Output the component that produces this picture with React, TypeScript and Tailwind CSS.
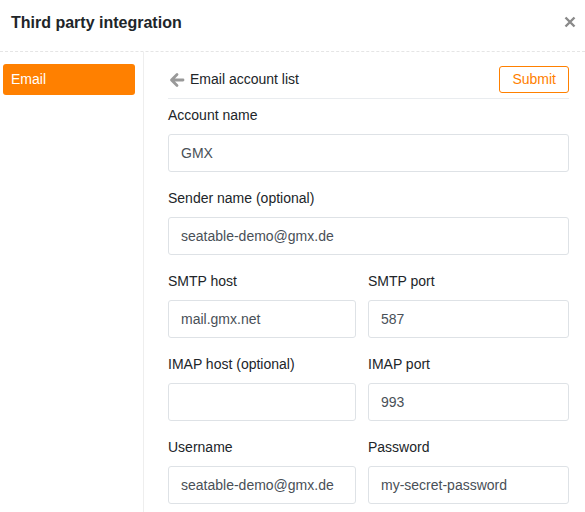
import type { ReactNode } from "react";

function Field({ label, children }: { label: string; children: ReactNode }) {
  return (
    <div className="mb-4">
      <div className="mb-2 text-[14px] leading-[21px] text-[#212529]">{label}</div>
      {children}
    </div>
  );
}

function Input({ value }: { value: string }) {
  return (
    <div className="flex h-[38px] items-center rounded-[3px] border border-[#dee2e6] px-[12px] text-[14px] text-[#495057]">
      {value}
    </div>
  );
}

export default function App() {
  return (
    <div className="h-[512px] w-[585px] overflow-hidden bg-white font-['Liberation_Sans',Arial,sans-serif]">
      <div className="flex h-[52px] items-start justify-between border-b border-dashed border-[#e5e5e5] pl-[11px] pr-[9px] pt-[13px]">
        <h1 className="text-[16px] font-bold leading-[20px] text-[#212529]">Third party integration</h1>
        <svg width="12" height="12" viewBox="0 0 12 12" className="mt-[3px]">
          <path d="M1.5 1.5 L10.5 10.5 M10.5 1.5 L1.5 10.5" stroke="#8a8a8a" strokeWidth="2.4" />
        </svg>
      </div>

      <div className="flex h-[460px]">
        <div className="w-[144px] shrink-0 border-r border-[#eeeeee] pl-[3px] pr-[8px] pt-[12px]">
          <div className="flex h-[31px] items-center rounded-[3px] bg-[#ff8000] pl-[8px] text-[14px] text-white">
            Email
          </div>
        </div>

        <div className="flex-1 pl-[24px] pr-[16px] pt-[14px]">
          <div className="flex items-center justify-between border-b border-[#e9ecef] pb-[5px]">
            <div className="flex items-center gap-[5px] text-[14px] text-[#212529]">
              <svg width="16" height="16" viewBox="0 0 16 16" className="ml-[1px]">
                <path d="M14 8 H3 M8 2.5 L2.5 8 L8 13.5" stroke="#999999" strokeWidth="2.8" fill="none" strokeLinecap="round" strokeLinejoin="round" />
              </svg>
              Email account list
            </div>
            <button className="h-[27px] rounded-[3px] border border-[#ff8000] px-[12px] text-[14px] text-[#ff8000]">
              Submit
            </button>
          </div>

          <div className="mt-[6px]">
            <Field label="Account name">
              <Input value="GMX" />
            </Field>
            <Field label="Sender name (optional)">
              <Input value="seatable-demo@gmx.de" />
            </Field>
            <div className="grid grid-cols-[188px_1fr] gap-x-3">
              <Field label="SMTP host">
                <Input value="mail.gmx.net" />
              </Field>
              <Field label="SMTP port">
                <Input value="587" />
              </Field>
              <Field label="IMAP host (optional)">
                <Input value="" />
              </Field>
              <Field label="IMAP port">
                <Input value="993" />
              </Field>
              <Field label="Username">
                <Input value="seatable-demo@gmx.de" />
              </Field>
              <Field label="Password">
                <Input value="my-secret-password" />
              </Field>
            </div>
          </div>
        </div>
      </div>
    </div>
  );
}
